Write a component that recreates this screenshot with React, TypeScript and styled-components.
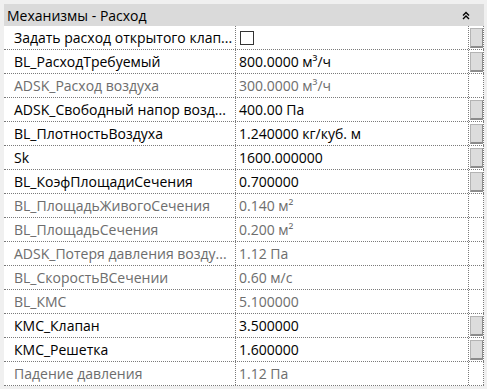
import React from "react";
import styled, { createGlobalStyle } from "styled-components";

const Global = createGlobalStyle`
  html, body {
    margin: 0;
    padding: 0;
    background: #f0f0f0;
  }
`;

const Panel = styled.div`
  width: 487px;
  height: 389px;
  box-sizing: border-box;
  padding: 4px 3px 0 4px;
  background: #f0f0f0;
  font-family: "Open Sans", "Noto Sans", sans-serif;
  font-size: 14px;
  overflow: hidden;
`;

const Header = styled.div`
  height: 22px;
  display: flex;
  align-items: center;
  justify-content: space-between;
  padding: 0 14px 0 3px;
  background: #dadada;
  color: #000;
`;

const Chevron = styled.svg`
  width: 8px;
  height: 9px;
`;

const Row = styled.div`
  display: grid;
  grid-template-columns: 232px 233px 15px;
  height: 24px;
  background: #fff;
  border-bottom: 1px dotted #7a7a7a;
  box-sizing: border-box;
`;

const Name = styled.div<{ $disabled?: boolean }>`
  display: flex;
  align-items: center;
  padding-left: 10px;
  border-right: 1px dotted #7a7a7a;
  color: ${(p) => (p.$disabled ? "#6d6d6d" : "#000")};
  white-space: nowrap;
  overflow: hidden;
`;

const Value = styled.div<{ $disabled?: boolean }>`
  display: flex;
  align-items: center;
  padding-left: 3px;
  border-right: 1px dotted #7a7a7a;
  color: ${(p) => (p.$disabled ? "#6d6d6d" : "#000")};
  white-space: nowrap;
`;

const ButtonCell = styled.div`
  display: flex;
  align-items: center;
  justify-content: center;
  border-right: 1px dotted #7a7a7a;
`;

const EditButton = styled.div`
  width: 11px;
  height: 17px;
  background: #dcdcdc;
  border: 1px solid #b4b4b4;
  border-right-color: #8c8c8c;
  border-bottom: 2px solid #8c8c8c;
`;

const Checkbox = styled.div`
  width: 12px;
  height: 12px;
  margin-left: 1px;
  border: 1px solid #333;
  background: #fff;
`;

type Item = {
  name: string;
  value: string;
  disabled?: boolean;
  checkbox?: boolean;
};

const items: Item[] = [
  { name: "Задать расход открытого клап...", value: "", checkbox: true },
  { name: "BL_РасходТребуемый", value: "800.0000 м³/ч" },
  { name: "ADSK_Расход воздуха", value: "300.0000 м³/ч", disabled: true },
  { name: "ADSK_Свободный напор возд...", value: "400.00 Па" },
  { name: "BL_ПлотностьВоздуха", value: "1.240000 кг/куб. м" },
  { name: "Sk", value: "1600.000000" },
  { name: "BL_КоэфПлощадиСечения", value: "0.700000" },
  { name: "BL_ПлощадьЖивогоСечения", value: "0.140 м²", disabled: true },
  { name: "BL_ПлощадьСечения", value: "0.200 м²", disabled: true },
  { name: "ADSK_Потеря давления возду...", value: "1.12 Па", disabled: true },
  { name: "BL_СкоростьВСечении", value: "0.60 м/с", disabled: true },
  { name: "BL_КМС", value: "5.100000", disabled: true },
  { name: "КМС_Клапан", value: "3.500000" },
  { name: "КМС_Решетка", value: "1.600000" },
  { name: "Падение давления", value: "1.12 Па", disabled: true },
];

export default function App() {
  return (
    <Panel>
      <Global />
      <Header>
        <span>Механизмы - Расход</span>
        <Chevron viewBox="0 0 8 9">
          <path d="M1 4.5 L4 1.5 L7 4.5 M1 8 L4 5 L7 8" fill="none" stroke="#000" strokeWidth="1.4" />
        </Chevron>
      </Header>
      {items.map((it) => (
        <Row key={it.name}>
          <Name $disabled={it.disabled}>{it.name}</Name>
          <Value $disabled={it.disabled}>
            {it.checkbox ? <Checkbox /> : it.value}
          </Value>
          <ButtonCell>{!it.disabled && <EditButton />}</ButtonCell>
        </Row>
      ))}
    </Panel>
  );
}
